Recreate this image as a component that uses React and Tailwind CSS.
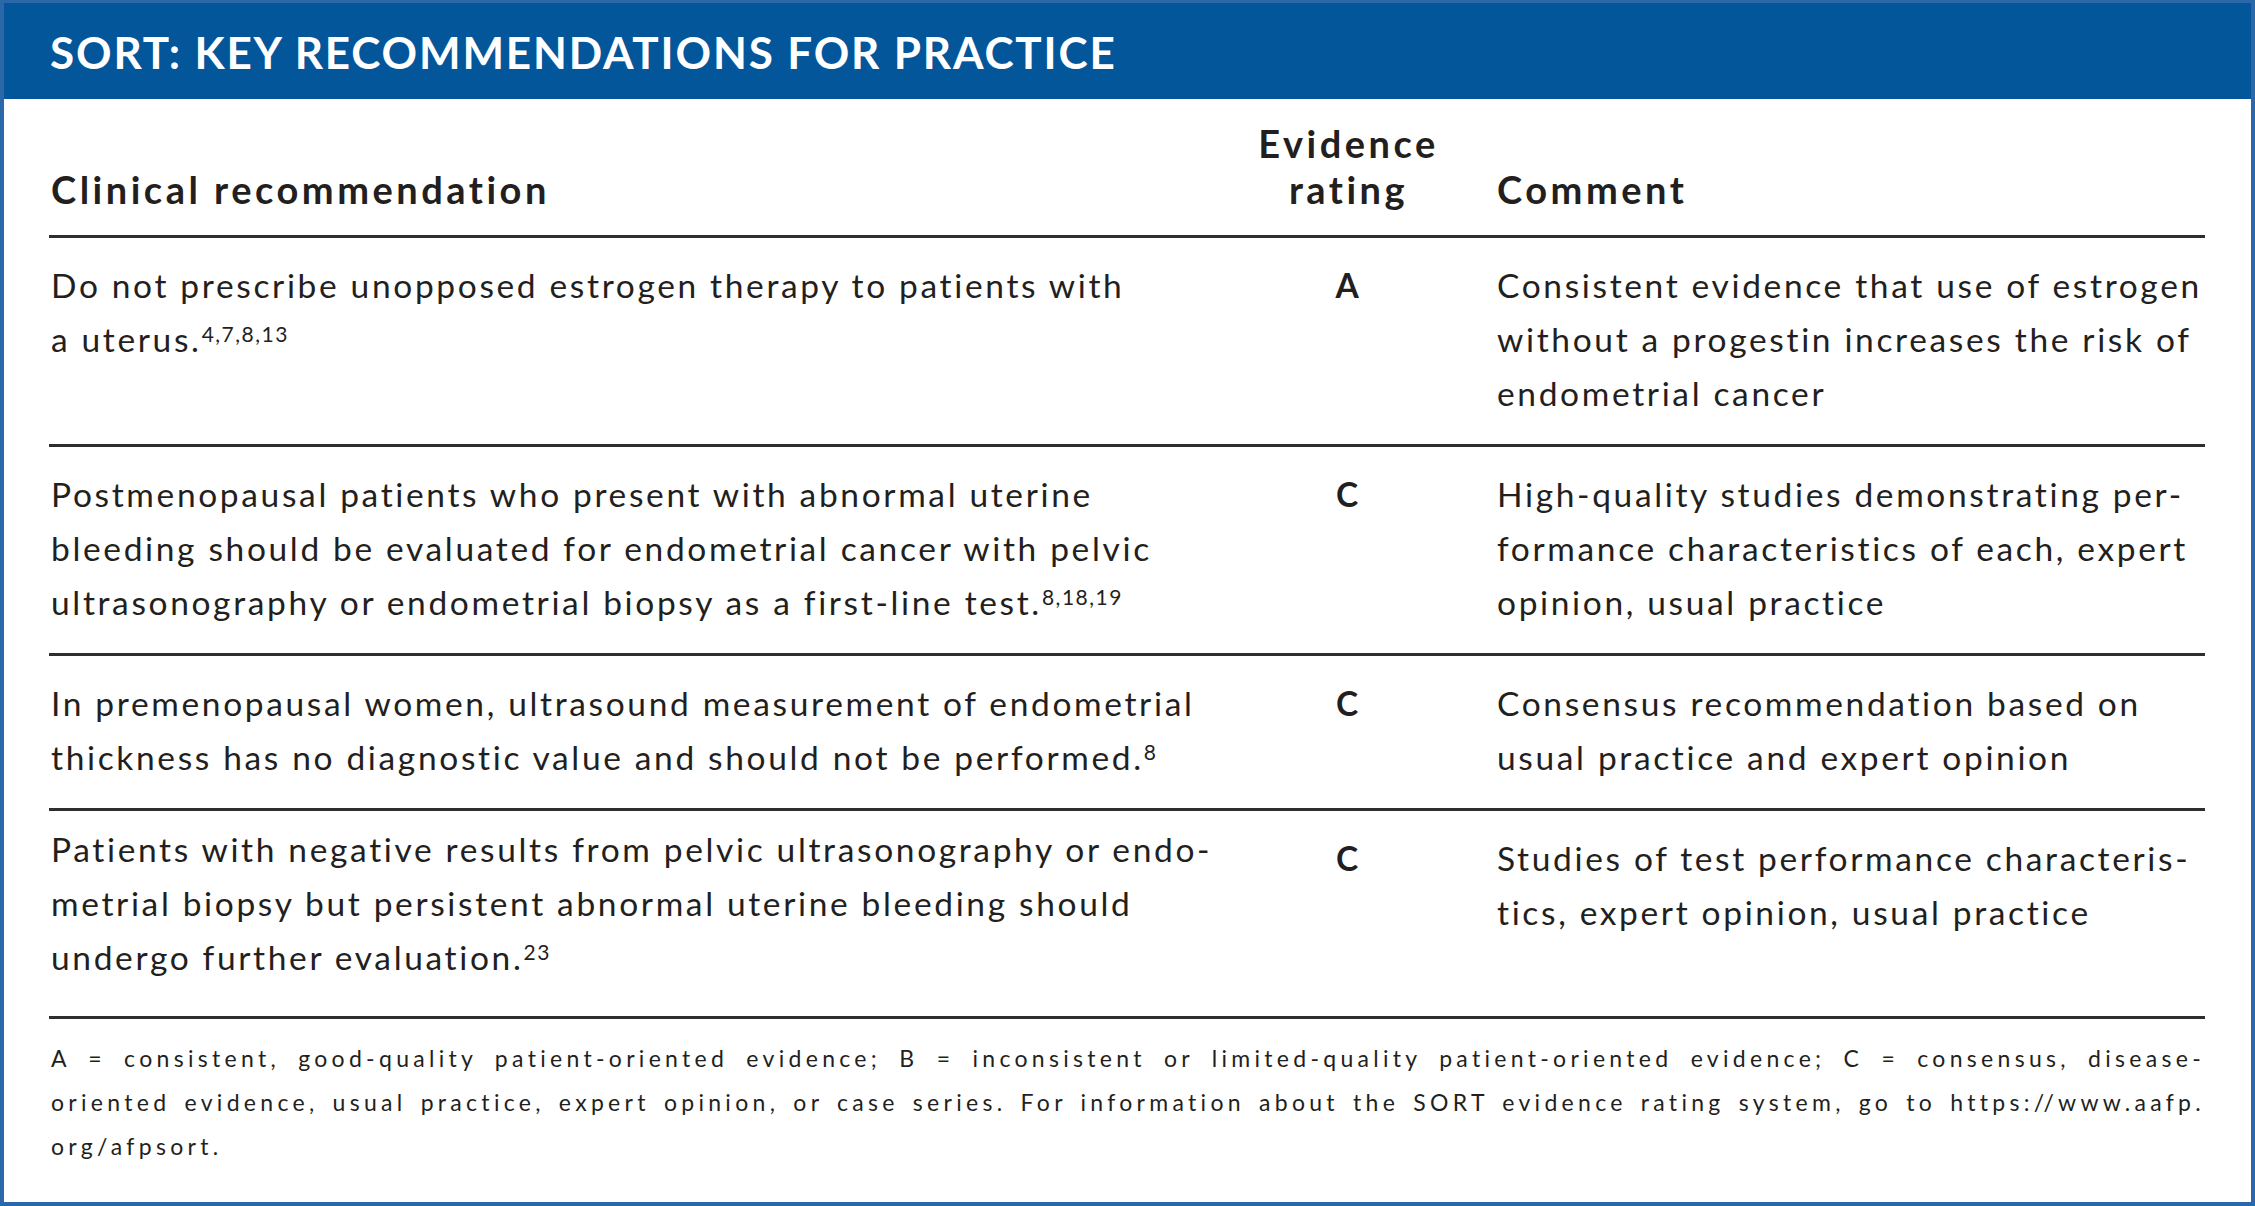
import React from "react";

const rows = [
  {
    rating: "A",
    pad: "pt-5 pb-6",
    shift: "",
    rec: [
      ["Do not prescribe unopposed estrogen therapy to patients with"],
      ["a uterus.", "4,7,8,13"],
    ],
    comment: [
      "Consistent evidence that use of estrogen",
      "without a progestin increases the risk of",
      "endometrial cancer",
    ],
  },
  {
    rating: "C",
    pad: "pt-5 pb-6",
    shift: "",
    rec: [
      ["Postmenopausal patients who present with abnormal uterine"],
      ["bleeding should be evaluated for endometrial cancer with pelvic"],
      ["ultrasonography or endometrial biopsy as a first-line test.", "8,18,19"],
    ],
    comment: [
      "High-quality studies demonstrating per-",
      "formance characteristics of each, expert",
      "opinion, usual practice",
    ],
  },
  {
    rating: "C",
    pad: "pt-5 pb-6",
    shift: "",
    rec: [
      ["In premenopausal women, ultrasound measurement of endometrial"],
      ["thickness has no diagnostic value and should not be performed.", "8"],
    ],
    comment: [
      "Consensus recommendation based on",
      "usual practice and expert opinion",
    ],
  },
  {
    rating: "C",
    pad: "pt-5 pb-8",
    shift: "-mt-[9px]",
    rec: [
      ["Patients with negative results from pelvic ultrasonography or endo-"],
      ["metrial biopsy but persistent abnormal uterine bleeding should"],
      ["undergo further evaluation.", "23"],
    ],
    comment: [
      "Studies of test performance characteris-",
      "tics, expert opinion, usual practice",
    ],
  },
];

const Line = ({ text, refs }) => (
  <div className="whitespace-nowrap">
    {text}
    {refs && <sup className="text-[21px] tracking-[1.5px]">{refs}</sup>}
  </div>
);

const SortTable = () => (
  <div className="w-[2255px] h-[1206px] bg-white border-[#2a68a9] border-x-[4px] border-b-[4px] border-t-[3px] font-['Lato','Open_Sans',sans-serif] text-[#231f20]">
    <div className="h-[96px] bg-[#03569a] flex items-center pl-[46px] pt-[2px]">
      <h1 className="text-white text-[44px] font-bold tracking-[1.85px]">
        SORT: KEY RECOMMENDATIONS FOR PRACTICE
      </h1>
    </div>

    <div className="pl-[45px] pr-[46px]">
      <div className="grid grid-cols-[1151px_297px_708px] items-end pt-[21px] pb-[23px] text-[38px] leading-[46px] font-bold tracking-[3.5px]">
        <div className="pl-[2px]">Clinical recommendation</div>
        <div className="text-center">
          Evidence
          <br />
          rating
        </div>
        <div>Comment</div>
      </div>

      {rows.map((row, i) => (
        <div
          key={i}
          className={`grid grid-cols-[1151px_297px_708px] items-start border-t-[3px] border-[#2e2e2e] text-[33.5px] leading-[54px] tracking-[2.65px] ${row.pad}`}
        >
          <div className={`pl-[2px] ${row.shift}`}>
            {row.rec.map(([text, refs], j) => (
              <Line key={j} text={text} refs={refs} />
            ))}
          </div>
          <div className="text-center font-bold">{row.rating}</div>
          <div>
            {row.comment.map((text, j) => (
              <Line key={j} text={text} />
            ))}
          </div>
        </div>
      ))}

      <div className="border-t-[3px] border-[#2e2e2e] pt-[17px] pl-[2px] text-[23px] leading-[44px] tracking-[4.3px]">
        <div className="text-justify [text-align-last:justify]">
          A = consistent, good-quality patient-oriented evidence; B = inconsistent or limited-quality patient-oriented evidence; C = consensus, disease-
        </div>
        <div className="text-justify [text-align-last:justify]">
          oriented evidence, usual practice, expert opinion, or case series. For information about the SORT evidence rating system, go to https://www.aafp.
        </div>
        <div>org/afpsort.</div>
      </div>
    </div>
  </div>
);

export default function App() {
  return <SortTable />;
}
